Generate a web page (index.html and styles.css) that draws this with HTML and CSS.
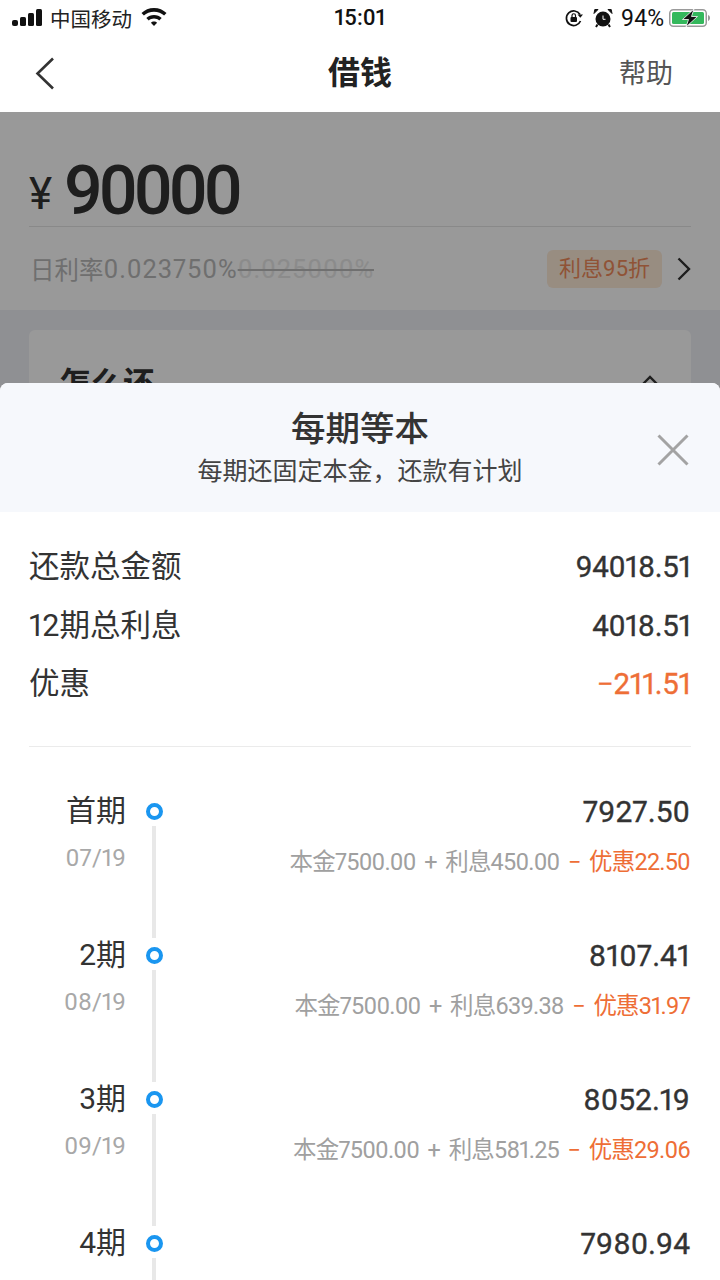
FILE: index.html
```html
<!DOCTYPE html>
<html lang="zh-CN">
<head>
    <meta charset="UTF-8">
    <meta name="viewport" content="width=device-width, initial-scale=1.0">
    <title>借钱</title>
    <link rel="stylesheet" href="styles.css">
</head>
<body>
<div class="page">
    <div class="status-bar">
        <div class="status-left">
            <svg class="signal" width="32" height="18" viewBox="0 0 32 18"><rect x="0" y="11" width="6" height="6" rx="2"/><rect x="8" y="8" width="6" height="9" rx="1.5"/><rect x="16" y="4" width="6" height="13" rx="1.5"/><rect x="24" y="0" width="6" height="17" rx="1.5"/></svg>
            <span class="carrier">中国移动</span>
            <svg class="wifi" width="28" height="20" viewBox="0 0 28 20"><path d="M14 1C9 1 4.800 2.900 1.500 6l2.400 2.500C6.500 6 10 4.700 14 4.700s7.500 1.300 10.100 3.800L26.500 6C23.200 2.900 19 1 14 1z"/><path d="M14 8c-3 0-5.700 1.100-7.700 3l2.500 2.500c1.400-1.200 3.200-1.900 5.200-1.900s3.800.7 5.200 1.900l2.500-2.500c-2-1.900-4.700-3-7.700-3z"/><path d="M14 14.500c-1.300 0-2.300.5-3.100 1.200L14 19l3.100-3.300c-.8-.7-1.800-1.200-3.100-1.200z"/></svg>
        </div>
        <div class="status-time">15:01</div>
        <div class="status-right">
            <svg width="20" height="20" viewBox="0 0 20 20"><path d="M16 6.500A7.300 7.300 0 1 0 16.500 13" fill="none" stroke="#111" stroke-width="1.700"/><path d="M13.500 6.500h5.500l-2.700 3.200z" fill="#111"/><rect x="6.500" y="9" width="6.500" height="5" rx="1" fill="#111"/><path d="M8 9V7.500a1.700 1.700 0 0 1 3.500 0V9" fill="none" stroke="#111" stroke-width="1.200"/></svg>
            <svg class="alarm" width="20" height="20" viewBox="0 0 20 20"><circle cx="10" cy="11" r="7.500" fill="#111"/><path d="M1 5.500 5 1.500 1.800 1.500zM19 5.500 15 1.500 18.200 1.500z" fill="#111" stroke="#111"/><path d="M10 7.500v3.800h2.500" fill="none" stroke="#fff" stroke-width="1"/><path d="M4.500 16.500 3 19M15.500 16.500 17 19" stroke="#111" stroke-width="2"/></svg>
            <span class="battery-text">94%</span>
            <div class="battery">
                <svg width="42" height="18" viewBox="0 0 42 18"><rect x=".75" y=".75" width="36.500" height="16.500" rx="3.500" fill="none" stroke="#9a9a9a" stroke-width="1.500"/><rect x="3" y="3" width="32" height="12" rx="1.500" fill="#34b85c"/><path d="M39 6v6c1.300-.4 2-1.600 2-3s-.7-2.600-2-3z" fill="#9a9a9a"/><path d="M25 0 13.500 10.500h6L17 18 28.500 7.500h-6z" fill="#111" stroke="#fff" stroke-width=".8"/></svg>
            </div>
        </div>
    </div>

    <div class="nav-bar">
        <svg class="nav-back" width="20" height="33" viewBox="0 0 20 33"><path d="M18 1.500 2.500 16.500 18 31.500" fill="none" stroke="#333" stroke-width="2.600"/></svg>
        <div class="nav-title">借钱</div>
        <div class="nav-help">帮助</div>
    </div>

    <div class="amount-card">
        <div class="amount-line">
            <span class="yen">¥</span>
            <span class="amount">90000</span>
        </div>
        <div class="rate-line">
            <span class="rate">日利率</span><span class="rate rate-num">0.023750%</span><span class="rate-old">0.025000%</span>
            <span class="discount">利息95折</span>
            <svg class="rate-arrow" width="14" height="24" viewBox="0 0 14 24"><path d="M1.500 1.500 12 12 1.500 22.500" fill="none" stroke="#333" stroke-width="2.400"/></svg>
        </div>
    </div>

    <div class="behind">
        <div class="repay-card">
            <span class="repay-title">怎么还</span>
            <svg width="18" height="12" viewBox="0 0 18 12"><path d="M2 10 9 3l7 7" fill="none" stroke="#333" stroke-width="2.400"/></svg>
        </div>
    </div>

    <div class="overlay"></div>

    <div class="sheet">
        <div class="sheet-head">
            <div class="sheet-title">每期等本</div>
            <div class="sheet-sub">每期还固定本金，还款有计划</div>
            <svg class="sheet-close" width="32" height="32" viewBox="0 0 32 32"><path d="M1.500 1.500 30.500 30.500M30.500 1.500 1.500 30.500" stroke="#a3a3a3" stroke-width="3"/></svg>
        </div>

        <div class="summary">
            <div class="summary-row"><span class="label">还款总金额</span><span class="num">94018.51</span></div>
            <div class="summary-row"><span class="label">12期总利息</span><span class="num">4018.51</span></div>
            <div class="summary-row"><span class="label">优惠</span><span class="num orange">−211.51</span></div>
        </div>

        <div class="plan">
            <div class="plan-row">
                <div class="plan-left"><div class="plan-name">首期</div><div class="plan-date">07/19</div></div>
                <div class="plan-axis"><i class="dot"></i><i class="line"></i></div>
                <div class="plan-right">
                    <div class="plan-total">7927.50</div>
                    <div class="plan-detail">本金7500.00 + 利息450.00 <span class="orange">− 优惠22.50</span></div>
                </div>
            </div>
            <div class="plan-row">
                <div class="plan-left"><div class="plan-name">2期</div><div class="plan-date">08/19</div></div>
                <div class="plan-axis"><i class="dot"></i><i class="line"></i></div>
                <div class="plan-right">
                    <div class="plan-total">8107.41</div>
                    <div class="plan-detail">本金7500.00 + 利息639.38 <span class="orange">− 优惠31.97</span></div>
                </div>
            </div>
            <div class="plan-row">
                <div class="plan-left"><div class="plan-name">3期</div><div class="plan-date">09/19</div></div>
                <div class="plan-axis"><i class="dot"></i><i class="line"></i></div>
                <div class="plan-right">
                    <div class="plan-total">8052.19</div>
                    <div class="plan-detail">本金7500.00 + 利息581.25 <span class="orange">− 优惠29.06</span></div>
                </div>
            </div>
            <div class="plan-row">
                <div class="plan-left"><div class="plan-name">4期</div><div class="plan-date">10/19</div></div>
                <div class="plan-axis"><i class="dot"></i><i class="line"></i></div>
                <div class="plan-right">
                    <div class="plan-total">7980.94</div>
                </div>
            </div>
        </div>
    </div>
</div>
</body>
</html>
```

FILE: styles.css
```css
* {
    box-sizing: border-box;
}
body {
    margin: 0;
    font-family: Roboto, "Noto Sans CJK SC", sans-serif;
    font-variant-numeric: proportional-nums;
    color: #333;
}
.page {
    position: relative;
    width: 720px;
    height: 1280px;
    overflow: hidden;
    background: #eef0f5;
    white-space: nowrap;
}

/* status bar */
.status-bar {
    height: 40px;
    background: #fff;
    display: flex;
    align-items: center;
    justify-content: space-between;
    padding: 0 9px 4px 12px;
    color: #111;
    position: relative;
}
.status-left, .status-right {
    display: flex;
    align-items: center;
}
.signal {
    fill: #111;
}
.carrier {
    font-size: 20.500px;
    margin-left: 6px;
    color: #222;
}
.wifi {
    fill: #111;
    margin-left: 8px;
    margin-bottom: 2px;
}
.status-time {
    position: absolute;
    left: 0;
    right: 0;
    top: 5px;
    text-align: center;
    font-size: 22px;
    font-weight: 500;
}
.status-right {
    gap: 5px;
}
.alarm {
    margin-left: 4px;
}
.battery-text {
    font-size: 23px;
    margin-left: 3px;
}
.battery {
    display: flex;
}

/* nav */
.nav-bar {
    height: 72px;
    background: #fff;
    display: flex;
    align-items: center;
    justify-content: space-between;
    padding: 0 47px 6px 35px;
    position: relative;
}
.nav-title {
    position: absolute;
    left: 0;
    right: 0;
    text-align: center;
    font-size: 32px;
    font-weight: 700;
    padding-bottom: 6px;
    color: #222;
}
.nav-help {
    font-size: 27px;
    color: #555;
    margin-bottom: 4px;
}

/* page behind the sheet */
.amount-card {
    height: 198px;
    background: #fff;
    padding: 0 29px;
}
.amount-line {
    height: 115px;
    display: flex;
    align-items: center;
    border-bottom: 1px solid #e4e4e4;
    padding-top: 44px;
}
.yen {
    font-size: 44px;
    width: 35px;
    margin-top: 6px;
}
.amount {
    font-size: 68px;
    font-weight: 500;
    letter-spacing: -5px;
}
.rate-line {
    height: 83px;
    display: flex;
    align-items: center;
    padding-left: 1px;
}
.rate {
    font-size: 24.500px;
    color: #b9b9b9;
}
.rate-num, .rate-old {
    font-size: 25.500px;
    letter-spacing: .9px;
}
.rate-old {
    color: #e8e8e8;
    text-decoration: line-through;
    text-decoration-color: #bbb;
}
.discount {
    margin-left: auto;
    height: 38px;
    line-height: 38px;
    padding: 0 12px;
    border-radius: 6px;
    background: #fdebd8;
    color: #f08a5a;
    font-size: 22px;
}
.rate-arrow {
    margin-left: 15px;
}
.behind {
    padding: 20px 29px;
}
.repay-card {
    height: 200px;
    background: #fff;
    border-radius: 6px;
    display: flex;
    justify-content: space-between;
    padding: 34px 32px 0 30px;
}
.repay-title {
    font-size: 32px;
    font-weight: 700;
    line-height: 40px;
}
.repay-card svg {
    margin-top: 10px;
}
.overlay {
    position: absolute;
    top: 112px;
    left: 0;
    right: 0;
    bottom: 0;
    background: rgba(0, 0, 0, .4);
}

/* bottom sheet */
.sheet {
    position: absolute;
    top: 383px;
    left: 0;
    right: 0;
    bottom: 0;
    background: #fff;
    border-radius: 8px 8px 0 0;
    overflow: hidden;
}
.sheet-head {
    position: relative;
    height: 129px;
    background: #f6f8fc;
    text-align: center;
    padding-top: 23px;
}
.sheet-title {
    font-size: 34.500px;
    font-weight: 500;
    line-height: 46px;
}
.sheet-sub {
    font-size: 25px;
    line-height: 34px;
    margin-top: 3px;
    color: #444;
}
.sheet-close {
    position: absolute;
    right: 31px;
    top: 51px;
}
.summary {
    margin: 0 29px;
    padding: 25px 0 33px;
    border-bottom: 1px solid #ebebeb;
}
.summary-row {
    display: flex;
    justify-content: space-between;
    align-items: center;
    height: 58.500px;
    font-size: 30.500px;
}
.label {
    margin-bottom: 4px;
}
.num {
    font-size: 29.500px;
    letter-spacing: -.3px;
    -webkit-text-stroke: .35px currentColor;
    margin-top: 2px;
}
.orange {
    color: #ee6e36;
}
.plan {
    padding: 29px 30px 0 0;
}
.plan-row {
    display: flex;
    height: 144px;
}
.plan-left {
    width: 126px;
    text-align: right;
}
.plan-name {
    font-size: 30px;
    line-height: 70px;
    height: 70px;
}
.plan-date {
    font-size: 24px;
    line-height: 26px;
    margin-top: -1px;
    color: #a8a8a8;
}
.plan-axis {
    width: 56px;
    display: flex;
    flex-direction: column;
    align-items: center;
    padding-top: 27px;
}
.dot {
    flex: none;
    width: 17px;
    height: 17px;
    border: 4px solid #1a96f0;
    border-radius: 50%;
    background: #fff;
}
.line {
    flex: none;
    width: 4px;
    height: 112px;
    margin-top: 6px;
    background: #e8e8e8;
}
.plan-right {
    flex: 1;
    text-align: right;
}
.plan-total {
    font-size: 30px;
    -webkit-text-stroke: .35px currentColor;
    line-height: 72px;
    height: 70px;
}
.plan-detail {
    font-size: 23.500px;
    line-height: 32px;
    letter-spacing: -.8px;
    word-spacing: 3.500px;
    -webkit-text-stroke: 0;
    color: #a0a0a0;
}
```
